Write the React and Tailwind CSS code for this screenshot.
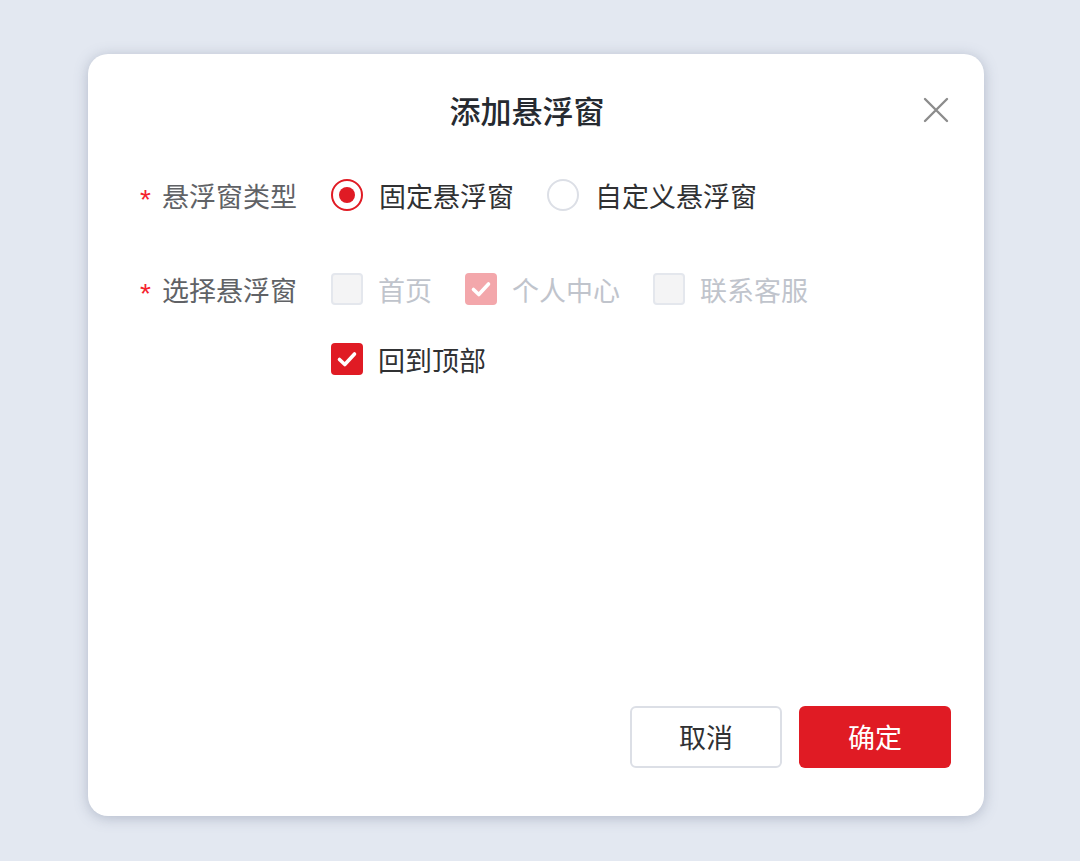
import { useState } from "react";

const font = { fontFamily: '"Noto Sans CJK SC", "Noto Sans", sans-serif' };

function CheckMark() {
  return (
    <svg viewBox="0 0 32 32" className="h-full w-full">
      <path d="M8.5 16.5 L13.8 21.5 L23.5 11" fill="none" stroke="white" strokeWidth="3.6" strokeLinecap="round" strokeLinejoin="round" />
    </svg>
  );
}

function Radio({ checked, label, onClick }) {
  return (
    <button type="button" onClick={onClick} className="flex h-[32px] items-center gap-[16px]">
      <span
        className={`flex h-[32px] w-[32px] items-center justify-center rounded-full border-2 ${
          checked ? "border-[#e01b24]" : "border-[#dcdfe6]"
        }`}
      >
        {checked && <span className="h-[16px] w-[16px] rounded-full bg-[#e01b24]" />}
      </span>
      <span className="text-[27px] leading-none text-[#303133]">{label}</span>
    </button>
  );
}

function Checkbox({ checked, disabled, label, onClick }) {
  let box = "border-2 border-[#dcdfe6] bg-white";
  if (disabled && checked) box = "bg-[#f3a7ab]";
  else if (disabled) box = "border-2 border-[#e4e7ed] bg-[#f4f4f5]";
  else if (checked) box = "bg-[#e01b24]";
  return (
    <button type="button" onClick={disabled ? undefined : onClick} className="flex h-[32px] items-center gap-[15px]">
      <span className={`h-[32px] w-[32px] rounded-[4px] ${box}`}>{checked && <CheckMark />}</span>
      <span className={`text-[27px] leading-none ${disabled ? "text-[#c0c4cc]" : "text-[#303133]"}`}>{label}</span>
    </button>
  );
}

function FormLabel({ children }) {
  return (
    <label className="flex h-[32px] w-[191px] shrink-0 items-center pr-[33px] text-[27px] leading-none text-[#606266]">
      <span
        className="mr-[11px] translate-y-[5px] text-[28px] text-[#f5222d]"
        style={{ fontFamily: '"Liberation Sans", sans-serif' }}
      >
        *
      </span>
      {children}
    </label>
  );
}

export default function App() {
  const [type, setType] = useState("fixed");
  const [backTop, setBackTop] = useState(true);

  return (
    <div className="min-h-[861px] w-full bg-[#e3e8f1] pt-[54px] pl-[88px]" style={font}>
      <div className="relative flex h-[762px] w-[896px] flex-col rounded-[20px] bg-white shadow-[0_2px_14px_rgba(90,100,130,0.35)]">
        <div className="pl-[32px] pr-[50px] pt-[34px]">
          <h2 className="h-[44px] text-center text-[31px] font-medium leading-[44px] text-[#262a30]">添加悬浮窗</h2>
        </div>
        <button type="button" className="absolute right-[35px] top-[43px] h-[26px] w-[26px] text-[#8c8c8c]">
          <svg viewBox="0 0 26 26" className="h-full w-full">
            <path d="M2 2 L24 24 M24 2 L2 24" stroke="currentColor" strokeWidth="2.4" strokeLinecap="round" />
          </svg>
        </button>

        <div className="mt-[47px] flex flex-col gap-[62px] pl-[52px] pr-[32px]">
          <div className="flex">
            <FormLabel>悬浮窗类型</FormLabel>
            <div className="flex items-center gap-[33px]">
              <Radio checked={type === "fixed"} label="固定悬浮窗" onClick={() => setType("fixed")} />
              <Radio checked={type === "custom"} label="自定义悬浮窗" onClick={() => setType("custom")} />
            </div>
          </div>

          <div className="flex">
            <FormLabel>选择悬浮窗</FormLabel>
            <div className="flex flex-1 flex-wrap gap-x-[33px] gap-y-[38px]">
              <Checkbox disabled label="首页" />
              <Checkbox disabled checked label="个人中心" />
              <Checkbox disabled label="联系客服" />
              <Checkbox checked={backTop} label="回到顶部" onClick={() => setBackTop(!backTop)} />
            </div>
          </div>
        </div>

        <div className="mt-auto flex justify-end gap-[17px] pb-[48px] pr-[33px]">
          <button type="button" className="h-[62px] w-[152px] rounded-[6px] border-2 border-[#dcdfe6] bg-white text-[27px] text-[#303133]">
            取消
          </button>
          <button type="button" className="h-[62px] w-[152px] rounded-[6px] bg-[#e01b24] text-[27px] text-white">
            确定
          </button>
        </div>
      </div>
    </div>
  );
}
